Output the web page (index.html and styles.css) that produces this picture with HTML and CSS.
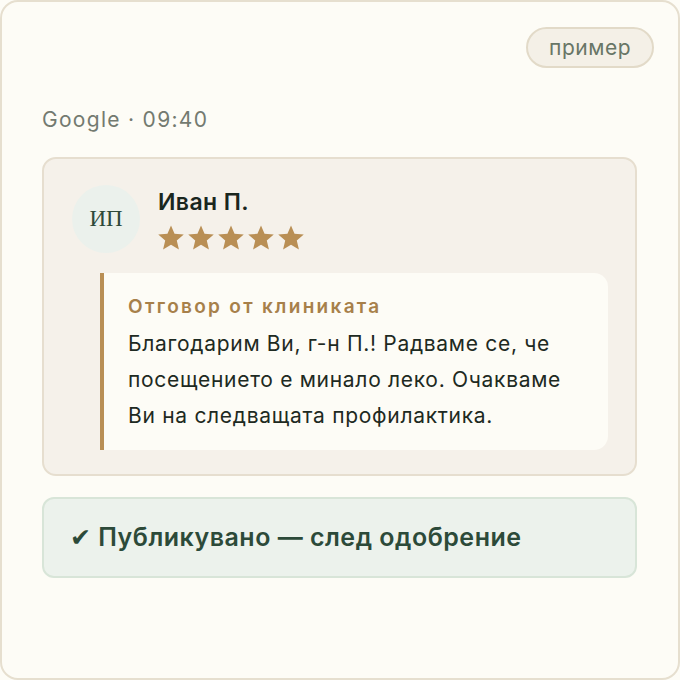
FILE: index.html
```html
<!DOCTYPE html>
<html lang="bg">
<head>
    <meta charset="UTF-8">
    <meta name="viewport" content="width=device-width, initial-scale=1.0">
    <title>Отзив</title>
    <link rel="stylesheet" href="styles.css">
</head>
<body>
    <div class="frame">
        <span class="tag">пример</span>

        <div class="source">Google · 09:40</div>

        <div class="review">
            <div class="review-head">
                <div class="avatar">ИП</div>
                <div class="who">
                    <div class="name">Иван П.</div>
                    <div class="stars">
                        <svg viewBox="1 1.5 22 20.5"><polygon points="12,1.5 15,8.6 22.8,9.2 16.9,14.3 18.7,22 12,17.9 5.3,22 7.1,14.3 1.2,9.2 9,8.6"/></svg>
                        <svg viewBox="1 1.5 22 20.5"><polygon points="12,1.5 15,8.6 22.8,9.2 16.9,14.3 18.7,22 12,17.9 5.3,22 7.1,14.3 1.2,9.2 9,8.6"/></svg>
                        <svg viewBox="1 1.5 22 20.5"><polygon points="12,1.5 15,8.6 22.8,9.2 16.9,14.3 18.7,22 12,17.9 5.3,22 7.1,14.3 1.2,9.2 9,8.6"/></svg>
                        <svg viewBox="1 1.5 22 20.5"><polygon points="12,1.5 15,8.6 22.8,9.2 16.9,14.3 18.7,22 12,17.9 5.3,22 7.1,14.3 1.2,9.2 9,8.6"/></svg>
                        <svg viewBox="1 1.5 22 20.5"><polygon points="12,1.5 15,8.6 22.8,9.2 16.9,14.3 18.7,22 12,17.9 5.3,22 7.1,14.3 1.2,9.2 9,8.6"/></svg>
                    </div>
                </div>
            </div>

            <div class="reply">
                <div class="reply-title">Отговор от клиниката</div>
                <p class="reply-text">Благодарим Ви, г-н П.! Радваме се, че посещението е минало леко. Очакваме Ви на следващата профилактика.</p>
            </div>
        </div>

        <div class="status"><span class="check">✔</span> Публикувано — след одобрение</div>
    </div>
</body>
</html>
```

FILE: styles.css
```css
html, body {
    margin: 0;
    padding: 0;
}
body {
    font-family: Inter, "Noto Sans", sans-serif;
    background: #fdfcf6;
    color: #1e2a22;
}
.frame {
    position: relative;
    box-sizing: border-box;
    width: 680px;
    height: 680px;
    padding: 105px 41px 0 40px;
    background: #fdfcf6;
    border: 2px solid #e6dfcf;
    border-radius: 18px;
}
.tag {
    position: absolute;
    top: 25px;
    right: 24px;
    box-sizing: border-box;
    height: 41px;
    padding: 0 21px;
    display: flex;
    align-items: center;
    font-size: 21px;
    letter-spacing: 0.5px;
    color: #687666;
    background: #f4f0e7;
    border: 2px solid #e2dac8;
    border-radius: 21px;
}
.source {
    font-size: 21px;
    letter-spacing: 1.3px;
    color: #737a70;
    margin-bottom: 25px;
}
.review {
    background: #f5f1ea;
    border: 2px solid #e6decf;
    border-radius: 14px;
    padding: 26px 27px 24px 28px;
}
.review-head {
    display: flex;
    align-items: center;
    gap: 18px;
}
.avatar {
    width: 68px;
    height: 68px;
    border-radius: 50%;
    background: #ebf1ec;
    color: #2e4a3a;
    font-family: "Liberation Serif", serif;
    font-size: 23px;
    display: flex;
    align-items: center;
    justify-content: center;
}
.who {
    display: flex;
    flex-direction: column;
    gap: 9px;
}
.name {
    font-size: 23px;
    line-height: 28px;
    font-weight: 600;
    letter-spacing: 0.4px;
    color: #1a261e;
}
.stars {
    display: flex;
    gap: 4px;
    height: 25px;
}
.stars svg {
    width: 26px;
    height: 25px;
    fill: #b98f55;
}
.reply {
    margin: 20px 0 0 28px;
    background: #fdfcf6;
    border-left: 4px solid #b98f55;
    border-radius: 0 14px 14px 0;
    padding: 22px 20px 16px 24px;
}
.reply-title {
    font-size: 19px;
    line-height: 23px;
    font-weight: 600;
    letter-spacing: 2.3px;
    color: #a7804a;
    margin-bottom: 8px;
}
.reply-text {
    margin: 0;
    font-size: 21px;
    line-height: 36px;
    letter-spacing: 0.7px;
    color: #1e2a22;
}
.status {
    margin-top: 21px;
    background: #ecf2ec;
    border: 2px solid #d8e5d8;
    border-radius: 12px;
    padding: 24px 26px;
    font-size: 25px;
    line-height: 28px;
    font-weight: 600;
    letter-spacing: 0.5px;
    color: #2c4a39;
}
.check {
    font-family: "DejaVu Sans", sans-serif;
    font-size: 25px;
}
```
